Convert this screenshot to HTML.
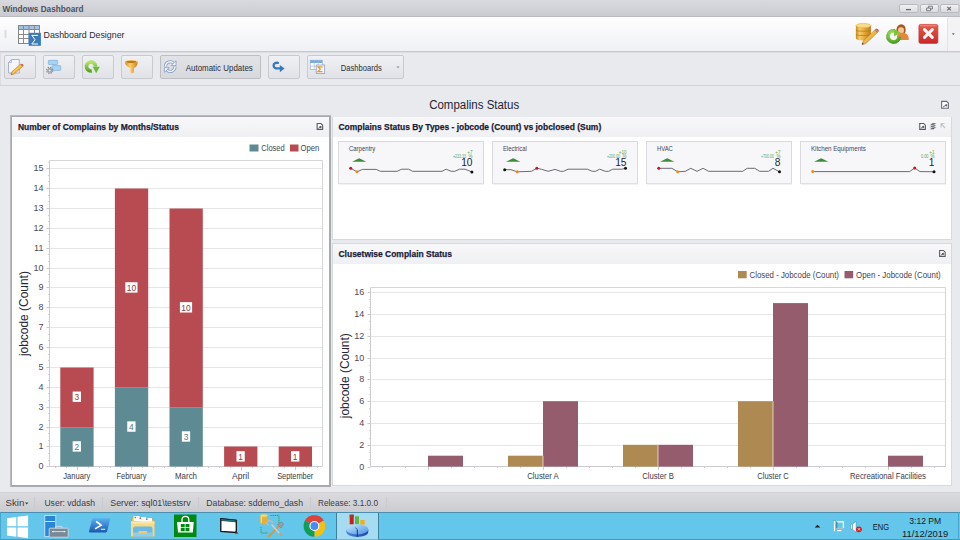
<!DOCTYPE html>
<html><head><meta charset="utf-8"><style>
html,body{margin:0;padding:0;width:960px;height:540px;overflow:hidden;background:#e9eaee}
svg{display:block;font-family:"Liberation Sans", sans-serif}
</style></head><body>
<svg width="960" height="540" viewBox="0 0 960 540">
<defs>
<linearGradient id="gTitle" x1="0" y1="0" x2="0" y2="1"><stop offset="0" stop-color="#d9dadf"/><stop offset="1" stop-color="#cacbd0"/></linearGradient>
<linearGradient id="gRib" x1="0" y1="0" x2="0" y2="1"><stop offset="0" stop-color="#fefefe"/><stop offset="1" stop-color="#f0f1f5"/></linearGradient>
<linearGradient id="gBtn" x1="0" y1="0" x2="0" y2="1"><stop offset="0" stop-color="#f0f1f4"/><stop offset="1" stop-color="#e1e2e7"/></linearGradient>
<linearGradient id="gBtnP" x1="0" y1="0" x2="0" y2="1"><stop offset="0" stop-color="#e2e3e6"/><stop offset="1" stop-color="#d8d9dd"/></linearGradient>
<linearGradient id="gWb" x1="0" y1="0" x2="0" y2="1"><stop offset="0" stop-color="#f3f3f5"/><stop offset="1" stop-color="#d9dadf"/></linearGradient>
<linearGradient id="gStat" x1="0" y1="0" x2="0" y2="1"><stop offset="0" stop-color="#dcdce0"/><stop offset="1" stop-color="#cbccd0"/></linearGradient>
<linearGradient id="gGold" x1="0" y1="0" x2="1" y2="0"><stop offset="0" stop-color="#d99a2a"/><stop offset="0.5" stop-color="#f7d47a"/><stop offset="1" stop-color="#d38f20"/></linearGradient>
<linearGradient id="gRed" x1="0" y1="0" x2="0" y2="1"><stop offset="0" stop-color="#e85a48"/><stop offset="1" stop-color="#c8282a"/></linearGradient>
<linearGradient id="gGreen" x1="0" y1="0" x2="0" y2="1"><stop offset="0" stop-color="#9bd24a"/><stop offset="1" stop-color="#4b9a1e"/></linearGradient>
<linearGradient id="gHead" x1="0" y1="0" x2="0" y2="1"><stop offset="0" stop-color="#f8f8fa"/><stop offset="1" stop-color="#eff0f3"/></linearGradient>
</defs>
<rect x="0" y="0" width="960" height="540" fill="#e9eaee" />
<rect x="0" y="0" width="960" height="17" fill="url(#gTitle)" />
<line x1="0" y1="16.5" x2="960" y2="16.5" stroke="#babbc1" stroke-width="1" />
<text x="2.5" y="12" font-size="9.3" fill="#50505e" font-weight="bold" text-anchor="start" textLength="81" lengthAdjust="spacingAndGlyphs" >Windows Dashboard</text>
<rect x="899.5" y="4.5" width="18.5" height="8" rx="1.5" fill="url(#gWb)" stroke="#b8b9be" stroke-width="1"/>
<rect x="920.5" y="4.5" width="18" height="8" rx="1.5" fill="url(#gWb)" stroke="#b8b9be" stroke-width="1"/>
<rect x="940.5" y="4.5" width="18.5" height="8" rx="1.5" fill="url(#gWb)" stroke="#b8b9be" stroke-width="1"/>
<line x1="906" y1="9.6" x2="911" y2="9.6" stroke="#6a6a74" stroke-width="1.3" />
<path d="M926.6 8h4v2.8h-4z M928.4 8v-1.8h4v2.8h-1.8" fill="none" stroke="#7a7a84" stroke-width="1"/>
<path d="M947.3 6.8l3.6 3.6 M950.9 6.8l-3.6 3.6" stroke="#6a6a74" stroke-width="1.2"/>
<rect x="0" y="17" width="960" height="34" fill="url(#gRib)" />
<line x1="0" y1="51.5" x2="960" y2="51.5" stroke="#c8c9ce" stroke-width="1" />
<line x1="947.5" y1="18" x2="947.5" y2="51" stroke="#e3e3e6" stroke-width="1" />
<rect x="948" y="17" width="12" height="34" fill="#f3f3f5" />
<path d="M951.8 33.3h3l-1.5 1.7z" fill="#666"/>
<rect x="4.5" y="29.9" width="2" height="7.8" fill="#dcdce0"/>
<g>
<rect x="18.5" y="25.5" width="21" height="18" fill="#ffffff" stroke="#858585" stroke-width="1"/>
<rect x="19" y="26" width="20" height="3.5" fill="#a2c2e4"/>
<path d="M23.5 25.5v18 M29 25.5v18 M34.5 25.5v18 M18.5 29.5h21 M18.5 34.5h21 M18.5 38.5h21" stroke="#8a8a8a" stroke-width="1"/>
<rect x="28.7" y="32.8" width="12.2" height="13" fill="#3a7abf"/>
<path d="M37.9 35.4h-6.1l3.3 4.3-3.3 4.3h6.2" fill="none" stroke="#ffffff" stroke-width="1"/>
</g>
<text x="43.5" y="37.5" font-size="9.8" fill="#2c2c36" font-weight="normal" text-anchor="start" textLength="81" lengthAdjust="spacingAndGlyphs" >Dashboard Designer</text>
<defs><linearGradient id="gDb" x1="0" y1="0" x2="1" y2="0"><stop offset="0" stop-color="#c98a22"/><stop offset="0.25" stop-color="#f6cf6a"/><stop offset="0.55" stop-color="#e7aa3a"/><stop offset="1" stop-color="#c07a1a"/></linearGradient>
<linearGradient id="gPen" x1="0" y1="0" x2="1" y2="1"><stop offset="0" stop-color="#fbe27a"/><stop offset="1" stop-color="#e08a20"/></linearGradient>
<radialGradient id="gRing" cx="0.4" cy="0.3" r="0.8"><stop offset="0" stop-color="#b8e67a"/><stop offset="1" stop-color="#4a9e22"/></radialGradient></defs>
<g>
<path d="M855.9 25.6v12.6c0 1.3 3.4 2.3 7.5 2.3s7.5-1 7.5-2.3v-12.6z" fill="url(#gDb)"/>
<ellipse cx="863.4" cy="25.6" rx="7.5" ry="2.2" fill="#f8dc8a" stroke="#d9a040" stroke-width="0.5"/>
<path d="M855.9 30.3c1 1.2 14 1.2 15 0 M855.9 34.6c1 1.2 14 1.2 15 0" stroke="#b87818" stroke-width="0.8" fill="none"/>
<path d="M862 44.6l1.2-3.6 12.4-11.8 2.6 2.6-12.4 11.8z" fill="url(#gPen)" stroke="#a86a18" stroke-width="0.5"/>
<path d="M875.6 29.2l2.6 2.6 0.6-0.6c0.4-0.9-1.4-2.9-2.4-2.6z" fill="#e0585a"/>
<path d="M874.6 30.2l2.6 2.6 0.8-0.8-2.6-2.6z" fill="#7a8cb0"/>
<path d="M862 44.6l0.6-1.9 1.3 1.3z" fill="#2a2a4a"/>
</g>
<g>
<path d="M896.8 33c-0.7-2-0.4-4.8 0.6-6.2 0.8-1.6 2.2-2.6 3.8-2.6s3.2 0.9 3.9 2.6c0.8 1.6 0.7 4.5 0 6.2z" fill="#a9561f"/>
<ellipse cx="901" cy="30.3" rx="3" ry="3.6" fill="#f4c79a"/>
<path d="M897.4 28.5c0.5-2.2 1.8-3.1 3.6-3.1s3.2 0.9 3.6 3.1c-1.4-1-2.4-1.2-3.6-1.2s-2.4 0.3-3.6 1.2z" fill="#a9561f"/>
<path d="M897 40v-3.2c0-2.6 2-4.1 4.2-4.1h1.6c3.2 0 5.9 2.3 5.9 5.6v1.7z" fill="#e2883a"/>
<path d="M899.2 36.6a5.6 5.6 0 1 1-4.6-5.7" fill="none" stroke="url(#gRing)" stroke-width="3.8"/>
<path d="M893.8 28.6l6.6 4.2-6.2 3.6z" fill="#7cc43a"/>
</g>
<g>
<rect x="918.9" y="24.4" width="19" height="19" rx="1.6" fill="url(#gRed)" stroke="#c03028" stroke-width="0.6"/>
<path d="M920 25.8h16.8" stroke="#f4a090" stroke-width="0.8"/>
<path d="M924.5 29.6l7.8 7.8 M932.3 29.6l-7.8 7.8" stroke="#f4f6fa" stroke-width="3" stroke-linecap="round"/>
</g>
<rect x="0" y="52" width="960" height="33" fill="#e9eaee" />
<line x1="0" y1="52.5" x2="960" y2="52.5" stroke="#dcdde1" stroke-width="1" />
<line x1="0" y1="85.5" x2="960" y2="85.5" stroke="#d3d4d8" stroke-width="1" />
<line x1="0.5" y1="52" x2="0.5" y2="85" stroke="#dcdce0" stroke-width="1" />
<rect x="4.5" y="55.5" width="31" height="23" rx="1.5" fill="url(#gBtn)" stroke="#c9cacf" stroke-width="1"/>
<rect x="43.5" y="55.5" width="31" height="23" rx="1.5" fill="url(#gBtn)" stroke="#c9cacf" stroke-width="1"/>
<rect x="82.5" y="55.5" width="31" height="23" rx="1.5" fill="url(#gBtn)" stroke="#c9cacf" stroke-width="1"/>
<rect x="121.5" y="55.5" width="31" height="23" rx="1.5" fill="url(#gBtn)" stroke="#c9cacf" stroke-width="1"/>
<rect x="160.5" y="55.5" width="100" height="23" rx="1.5" fill="url(#gBtnP)" stroke="#bebfc5" stroke-width="1"/>
<rect x="268.5" y="55.5" width="31" height="23" rx="1.5" fill="url(#gBtn)" stroke="#c9cacf" stroke-width="1"/>
<rect x="307.5" y="55.5" width="96" height="23" rx="1.5" fill="url(#gBtn)" stroke="#c9cacf" stroke-width="1"/>
<g>
<path d="M11.5 59.5h7.8v13.5h-10.8v-10.5z" fill="#f4f6fc" stroke="#a4a8d0" stroke-width="0.9"/>
<path d="M8.5 62.5h3v-3z" fill="#dfe2f2" stroke="#a4a8d0" stroke-width="0.7"/>
<path d="M11 74.8l0.8-3 8.6-7.6 2.3 2.3-8.6 7.6z" fill="#f3b63c" stroke="#b7701c" stroke-width="0.5"/>
<path d="M12.6 72.8l8.3-7.1" stroke="#fde08a" stroke-width="0.6"/>
<path d="M20.7 64.6l1.8 1.8 1-0.9c0.3-0.6-1-2-1.7-1.8z" fill="#e0585a"/>
<path d="M11.2 74.6l0.4-1.3 0.9 0.9z" fill="#555"/>
</g>
<g>
<rect x="48.3" y="60.3" width="9.3" height="4.2" rx="0.7" fill="#a8d4f4" stroke="#6ea6d8" stroke-width="0.6"/>
<rect x="52" y="65.6" width="8.6" height="4.8" rx="0.7" fill="#a8d4f4" stroke="#6ea6d8" stroke-width="0.6"/>
<circle cx="49.7" cy="70.4" r="3" fill="none" stroke="#8a8c92" stroke-width="1.3" stroke-dasharray="1.3 1.05"/>
<circle cx="49.7" cy="70.4" r="2.4" fill="#9a9ca2"/>
<circle cx="49.7" cy="70.4" r="1" fill="#f0f0f2"/>
</g>
<defs><linearGradient id="gRef" x1="0" y1="0" x2="0" y2="1"><stop offset="0" stop-color="#b6e46a"/><stop offset="1" stop-color="#5aa526"/></linearGradient></defs>
<g>
<path d="M95.5 66.5A4.5 4.5 0 1 0 91.8 70.9" fill="none" stroke="url(#gRef)" stroke-width="3.7"/>
<path d="M92.6 66.8h7.2l-3.6 6.5z" fill="#6cbb30"/>
</g>
<defs><linearGradient id="gFun" x1="0" y1="0" x2="1" y2="0"><stop offset="0" stop-color="#d98a1c"/><stop offset="0.4" stop-color="#fbd06a"/><stop offset="1" stop-color="#d0801a"/></linearGradient></defs>
<g>
<path d="M124.9 61.6C124.9 65.2 127.8 67.4 130.4 68.1V72.6Q132.2 73.8 134 72.6V68.1C136.6 67.4 137.7 65.2 137.7 61.6Z" fill="url(#gFun)"/>
<ellipse cx="131.3" cy="61.7" rx="6.4" ry="1.6" fill="#f6c660"/>
<ellipse cx="131.3" cy="61.9" rx="5" ry="1.1" fill="#c07818"/>
</g>
<g fill="none">
<path d="M165.4 66.6A4.8 4.8 0 0 1 173.6 63.2" stroke="#8299c2" stroke-width="3"/>
<path d="M175 66.6A4.8 4.8 0 0 1 166.8 70" stroke="#8299c2" stroke-width="3"/>
<path d="M165.4 66.6A4.8 4.8 0 0 1 173.6 63.2" stroke="#f4f7fc" stroke-width="1.4"/>
<path d="M175 66.6A4.8 4.8 0 0 1 166.8 70" stroke="#f4f7fc" stroke-width="1.4"/>
</g>
<path d="M176 65.6L176 60.8 171.2 65.6z" fill="#f4f7fc" stroke="#8299c2" stroke-width="0.8" stroke-linejoin="round"/>
<path d="M164.4 67.6L164.4 72.4 169.2 67.6z" fill="#f4f7fc" stroke="#8299c2" stroke-width="0.8" stroke-linejoin="round"/>
<text x="185.8" y="71" font-size="9" fill="#2c2c36" font-weight="normal" text-anchor="start" textLength="67" lengthAdjust="spacingAndGlyphs" >Automatic Updates</text>
<path d="M278 62.8c-2.5-0.3-4.4 0.8-4.4 2.6s1.6 3 4.2 3h3" fill="none" stroke="#3578c0" stroke-width="2.3" stroke-linecap="round"/>
<path d="M279.8 65l4.8 3.5-4.8 3.8z" fill="#3578c0"/>
<g>
<rect x="310.2" y="60.2" width="12" height="9.3" fill="#ffffff" stroke="#8aa4cc" stroke-width="0.6"/>
<rect x="310.2" y="60.2" width="12" height="2.8" fill="#78aae0"/>
<path d="M314.2 60.2v9.3 M318.2 60.2v9.3 M310.2 66.2h12" stroke="#9ab4d8" stroke-width="0.6"/>
<rect x="316.2" y="65" width="8.5" height="8.5" fill="#f6f6f8" stroke="#7e94b8" stroke-width="0.7"/>
<path d="M322.6 66.8h-4.6l2.3 2.4-2.3 2.4h4.6" fill="none" stroke="#e89a30" stroke-width="1.3"/>
</g>
<text x="340.8" y="71" font-size="9" fill="#2c2c36" font-weight="normal" text-anchor="start" textLength="41" lengthAdjust="spacingAndGlyphs" >Dashboards</text>
<path d="M396.5 66.5h3l-1.5 1.7z" fill="#8a8a92"/>
<text x="429.2" y="109" font-size="12.5" fill="#252535" font-weight="normal" text-anchor="start" textLength="90" lengthAdjust="spacingAndGlyphs" >Compalins Status</text>
<path d="M941.65 101.35H946.6L948.35 103.1V108.25H941.65Z" fill="#ffffff" stroke="#6a6a76" stroke-width="1.1" stroke-linejoin="miter"/>
<path d="M942.8000000000001 107.3L946.5 104.5" stroke="#6a6a76" stroke-width="1"/>
<circle cx="946.3" cy="105.39999999999999" r="1.1" fill="#6a6a76"/>
<rect x="10" y="115" width="321" height="372" fill="#a9aaaf" />
<rect x="12" y="117" width="317" height="368" fill="#ffffff" />
<line x1="10" y1="115.5" x2="331" y2="115.5" stroke="#b9bac0" stroke-width="1" />
<line x1="10.5" y1="115" x2="10.5" y2="487" stroke="#b9bac0" stroke-width="1" />
<rect x="12" y="117" width="317" height="20" fill="url(#gHead)" />
<text x="18" y="129.5" font-size="9.3" fill="#1c1c38" font-weight="bold" text-anchor="start" textLength="161" lengthAdjust="spacingAndGlyphs" stroke="#1c1c38" stroke-width="0.25">Number of Complains by Months/Status</text>
<path d="M317.15000000000003 123.55H320.90000000000003L322.65000000000003 125.3V129.35H317.15000000000003Z" fill="#ffffff" stroke="#5a5a66" stroke-width="1.1" stroke-linejoin="miter"/>
<path d="M318.3 128.4L320.80000000000007 126.15" stroke="#5a5a66" stroke-width="1"/>
<circle cx="320.6" cy="127.05" r="1.1" fill="#5a5a66"/>
<rect x="249.5" y="144.5" width="9" height="7" fill="#5e8a93" />
<text x="261.3" y="151" font-size="8.8" fill="#444452" font-weight="normal" text-anchor="start" textLength="23.4" lengthAdjust="spacingAndGlyphs" >Closed</text>
<rect x="290" y="144.5" width="8.5" height="7" fill="#b84b51" />
<text x="300.6" y="151" font-size="8.8" fill="#444452" font-weight="normal" text-anchor="start" textLength="18.8" lengthAdjust="spacingAndGlyphs" >Open</text>
<line x1="49.5" y1="446.5" x2="322.5" y2="446.5" stroke="#e6e6e8" stroke-width="1" />
<line x1="49.5" y1="427.5" x2="322.5" y2="427.5" stroke="#e6e6e8" stroke-width="1" />
<line x1="49.5" y1="407.5" x2="322.5" y2="407.5" stroke="#e6e6e8" stroke-width="1" />
<line x1="49.5" y1="387.5" x2="322.5" y2="387.5" stroke="#e6e6e8" stroke-width="1" />
<line x1="49.5" y1="367.5" x2="322.5" y2="367.5" stroke="#e6e6e8" stroke-width="1" />
<line x1="49.5" y1="347.5" x2="322.5" y2="347.5" stroke="#e6e6e8" stroke-width="1" />
<line x1="49.5" y1="327.5" x2="322.5" y2="327.5" stroke="#e6e6e8" stroke-width="1" />
<line x1="49.5" y1="307.5" x2="322.5" y2="307.5" stroke="#e6e6e8" stroke-width="1" />
<line x1="49.5" y1="287.5" x2="322.5" y2="287.5" stroke="#e6e6e8" stroke-width="1" />
<line x1="49.5" y1="268.5" x2="322.5" y2="268.5" stroke="#e6e6e8" stroke-width="1" />
<line x1="49.5" y1="248.5" x2="322.5" y2="248.5" stroke="#e6e6e8" stroke-width="1" />
<line x1="49.5" y1="228.5" x2="322.5" y2="228.5" stroke="#e6e6e8" stroke-width="1" />
<line x1="49.5" y1="208.5" x2="322.5" y2="208.5" stroke="#e6e6e8" stroke-width="1" />
<line x1="49.5" y1="188.5" x2="322.5" y2="188.5" stroke="#e6e6e8" stroke-width="1" />
<line x1="49.5" y1="168.5" x2="322.5" y2="168.5" stroke="#e6e6e8" stroke-width="1" />
<line x1="49.5" y1="160.5" x2="322.5" y2="160.5" stroke="#d6d6da" stroke-width="1" />
<line x1="322.5" y1="160.5" x2="322.5" y2="466.5" stroke="#d6d6da" stroke-width="1" />
<line x1="49.5" y1="160.5" x2="49.5" y2="466.5" stroke="#cbcbd0" stroke-width="1" />
<line x1="49.5" y1="466.5" x2="322.5" y2="466.5" stroke="#cbcbd0" stroke-width="1" />
<line x1="46.5" y1="466.5" x2="49.5" y2="466.5" stroke="#c6c6cc" stroke-width="1" />
<text x="43.4" y="469.4" font-size="9" fill="#4a4a5a" font-weight="normal" text-anchor="end" >0</text>
<line x1="48" y1="460.5" x2="49.5" y2="460.5" stroke="#cfcfd4" stroke-width="1" />
<line x1="48" y1="453.5" x2="49.5" y2="453.5" stroke="#cfcfd4" stroke-width="1" />
<line x1="46.5" y1="446.5" x2="49.5" y2="446.5" stroke="#c6c6cc" stroke-width="1" />
<text x="43.4" y="449.4" font-size="9" fill="#4a4a5a" font-weight="normal" text-anchor="end" >1</text>
<line x1="48" y1="440.5" x2="49.5" y2="440.5" stroke="#cfcfd4" stroke-width="1" />
<line x1="48" y1="433.5" x2="49.5" y2="433.5" stroke="#cfcfd4" stroke-width="1" />
<line x1="46.5" y1="427.5" x2="49.5" y2="427.5" stroke="#c6c6cc" stroke-width="1" />
<text x="43.4" y="430.4" font-size="9" fill="#4a4a5a" font-weight="normal" text-anchor="end" >2</text>
<line x1="48" y1="420.5" x2="49.5" y2="420.5" stroke="#cfcfd4" stroke-width="1" />
<line x1="48" y1="413.5" x2="49.5" y2="413.5" stroke="#cfcfd4" stroke-width="1" />
<line x1="46.5" y1="407.5" x2="49.5" y2="407.5" stroke="#c6c6cc" stroke-width="1" />
<text x="43.4" y="410.4" font-size="9" fill="#4a4a5a" font-weight="normal" text-anchor="end" >3</text>
<line x1="48" y1="400.5" x2="49.5" y2="400.5" stroke="#cfcfd4" stroke-width="1" />
<line x1="48" y1="393.5" x2="49.5" y2="393.5" stroke="#cfcfd4" stroke-width="1" />
<line x1="46.5" y1="387.5" x2="49.5" y2="387.5" stroke="#c6c6cc" stroke-width="1" />
<text x="43.4" y="390.4" font-size="9" fill="#4a4a5a" font-weight="normal" text-anchor="end" >4</text>
<line x1="48" y1="380.5" x2="49.5" y2="380.5" stroke="#cfcfd4" stroke-width="1" />
<line x1="48" y1="374.5" x2="49.5" y2="374.5" stroke="#cfcfd4" stroke-width="1" />
<line x1="46.5" y1="367.5" x2="49.5" y2="367.5" stroke="#c6c6cc" stroke-width="1" />
<text x="43.4" y="370.4" font-size="9" fill="#4a4a5a" font-weight="normal" text-anchor="end" >5</text>
<line x1="48" y1="360.5" x2="49.5" y2="360.5" stroke="#cfcfd4" stroke-width="1" />
<line x1="48" y1="354.5" x2="49.5" y2="354.5" stroke="#cfcfd4" stroke-width="1" />
<line x1="46.5" y1="347.5" x2="49.5" y2="347.5" stroke="#c6c6cc" stroke-width="1" />
<text x="43.4" y="350.4" font-size="9" fill="#4a4a5a" font-weight="normal" text-anchor="end" >6</text>
<line x1="48" y1="340.5" x2="49.5" y2="340.5" stroke="#cfcfd4" stroke-width="1" />
<line x1="48" y1="334.5" x2="49.5" y2="334.5" stroke="#cfcfd4" stroke-width="1" />
<line x1="46.5" y1="327.5" x2="49.5" y2="327.5" stroke="#c6c6cc" stroke-width="1" />
<text x="43.4" y="330.4" font-size="9" fill="#4a4a5a" font-weight="normal" text-anchor="end" >7</text>
<line x1="48" y1="321.5" x2="49.5" y2="321.5" stroke="#cfcfd4" stroke-width="1" />
<line x1="48" y1="314.5" x2="49.5" y2="314.5" stroke="#cfcfd4" stroke-width="1" />
<line x1="46.5" y1="307.5" x2="49.5" y2="307.5" stroke="#c6c6cc" stroke-width="1" />
<text x="43.4" y="310.4" font-size="9" fill="#4a4a5a" font-weight="normal" text-anchor="end" >8</text>
<line x1="48" y1="301.5" x2="49.5" y2="301.5" stroke="#cfcfd4" stroke-width="1" />
<line x1="48" y1="294.5" x2="49.5" y2="294.5" stroke="#cfcfd4" stroke-width="1" />
<line x1="46.5" y1="287.5" x2="49.5" y2="287.5" stroke="#c6c6cc" stroke-width="1" />
<text x="43.4" y="290.4" font-size="9" fill="#4a4a5a" font-weight="normal" text-anchor="end" >9</text>
<line x1="48" y1="281.5" x2="49.5" y2="281.5" stroke="#cfcfd4" stroke-width="1" />
<line x1="48" y1="274.5" x2="49.5" y2="274.5" stroke="#cfcfd4" stroke-width="1" />
<line x1="46.5" y1="268.5" x2="49.5" y2="268.5" stroke="#c6c6cc" stroke-width="1" />
<text x="43.4" y="271.4" font-size="9" fill="#4a4a5a" font-weight="normal" text-anchor="end" >10</text>
<line x1="48" y1="261.5" x2="49.5" y2="261.5" stroke="#cfcfd4" stroke-width="1" />
<line x1="48" y1="254.5" x2="49.5" y2="254.5" stroke="#cfcfd4" stroke-width="1" />
<line x1="46.5" y1="248.5" x2="49.5" y2="248.5" stroke="#c6c6cc" stroke-width="1" />
<text x="43.4" y="251.4" font-size="9" fill="#4a4a5a" font-weight="normal" text-anchor="end" >11</text>
<line x1="48" y1="241.5" x2="49.5" y2="241.5" stroke="#cfcfd4" stroke-width="1" />
<line x1="48" y1="234.5" x2="49.5" y2="234.5" stroke="#cfcfd4" stroke-width="1" />
<line x1="46.5" y1="228.5" x2="49.5" y2="228.5" stroke="#c6c6cc" stroke-width="1" />
<text x="43.4" y="231.4" font-size="9" fill="#4a4a5a" font-weight="normal" text-anchor="end" >12</text>
<line x1="48" y1="221.5" x2="49.5" y2="221.5" stroke="#cfcfd4" stroke-width="1" />
<line x1="48" y1="215.5" x2="49.5" y2="215.5" stroke="#cfcfd4" stroke-width="1" />
<line x1="46.5" y1="208.5" x2="49.5" y2="208.5" stroke="#c6c6cc" stroke-width="1" />
<text x="43.4" y="211.4" font-size="9" fill="#4a4a5a" font-weight="normal" text-anchor="end" >13</text>
<line x1="48" y1="201.5" x2="49.5" y2="201.5" stroke="#cfcfd4" stroke-width="1" />
<line x1="48" y1="195.5" x2="49.5" y2="195.5" stroke="#cfcfd4" stroke-width="1" />
<line x1="46.5" y1="188.5" x2="49.5" y2="188.5" stroke="#c6c6cc" stroke-width="1" />
<text x="43.4" y="191.4" font-size="9" fill="#4a4a5a" font-weight="normal" text-anchor="end" >14</text>
<line x1="48" y1="181.5" x2="49.5" y2="181.5" stroke="#cfcfd4" stroke-width="1" />
<line x1="48" y1="175.5" x2="49.5" y2="175.5" stroke="#cfcfd4" stroke-width="1" />
<line x1="46.5" y1="168.5" x2="49.5" y2="168.5" stroke="#c6c6cc" stroke-width="1" />
<text x="43.4" y="171.4" font-size="9" fill="#4a4a5a" font-weight="normal" text-anchor="end" >15</text>
<line x1="48" y1="162.5" x2="49.5" y2="162.5" stroke="#cfcfd4" stroke-width="1" />
<line x1="55.5" y1="466.5" x2="55.5" y2="468" stroke="#cacacf" stroke-width="1" />
<line x1="66.5" y1="466.5" x2="66.5" y2="468" stroke="#cacacf" stroke-width="1" />
<line x1="77.5" y1="466.5" x2="77.5" y2="470" stroke="#cacacf" stroke-width="1" />
<line x1="88.5" y1="466.5" x2="88.5" y2="468" stroke="#cacacf" stroke-width="1" />
<line x1="99.5" y1="466.5" x2="99.5" y2="468" stroke="#cacacf" stroke-width="1" />
<line x1="110.5" y1="466.5" x2="110.5" y2="468" stroke="#cacacf" stroke-width="1" />
<line x1="120.5" y1="466.5" x2="120.5" y2="468" stroke="#cacacf" stroke-width="1" />
<line x1="131.5" y1="466.5" x2="131.5" y2="470" stroke="#cacacf" stroke-width="1" />
<line x1="142.5" y1="466.5" x2="142.5" y2="468" stroke="#cacacf" stroke-width="1" />
<line x1="153.5" y1="466.5" x2="153.5" y2="468" stroke="#cacacf" stroke-width="1" />
<line x1="164.5" y1="466.5" x2="164.5" y2="468" stroke="#cacacf" stroke-width="1" />
<line x1="175.5" y1="466.5" x2="175.5" y2="468" stroke="#cacacf" stroke-width="1" />
<line x1="186.5" y1="466.5" x2="186.5" y2="470" stroke="#cacacf" stroke-width="1" />
<line x1="197.5" y1="466.5" x2="197.5" y2="468" stroke="#cacacf" stroke-width="1" />
<line x1="208.5" y1="466.5" x2="208.5" y2="468" stroke="#cacacf" stroke-width="1" />
<line x1="219.5" y1="466.5" x2="219.5" y2="468" stroke="#cacacf" stroke-width="1" />
<line x1="230.5" y1="466.5" x2="230.5" y2="468" stroke="#cacacf" stroke-width="1" />
<line x1="241.5" y1="466.5" x2="241.5" y2="470" stroke="#cacacf" stroke-width="1" />
<line x1="252.5" y1="466.5" x2="252.5" y2="468" stroke="#cacacf" stroke-width="1" />
<line x1="262.5" y1="466.5" x2="262.5" y2="468" stroke="#cacacf" stroke-width="1" />
<line x1="273.5" y1="466.5" x2="273.5" y2="468" stroke="#cacacf" stroke-width="1" />
<line x1="284.5" y1="466.5" x2="284.5" y2="468" stroke="#cacacf" stroke-width="1" />
<line x1="295.5" y1="466.5" x2="295.5" y2="470" stroke="#cacacf" stroke-width="1" />
<line x1="306.5" y1="466.5" x2="306.5" y2="468" stroke="#cacacf" stroke-width="1" />
<line x1="317.5" y1="466.5" x2="317.5" y2="468" stroke="#cacacf" stroke-width="1" />
<rect x="60.3" y="427.5" width="33.3" height="39.0" fill="#5e8a93" />
<rect x="60.3" y="367.5" width="33.3" height="60.0" fill="#b84b51" />
<text x="76.8" y="479" font-size="8.6" fill="#3a3a48" font-weight="normal" text-anchor="middle" textLength="27" lengthAdjust="spacingAndGlyphs" >January</text>
<rect x="72.64999999999999" y="441.22700000000003" width="8.3" height="10.4" fill="#ffffff" />
<text x="76.8" y="449.72700000000003" font-size="8.4" fill="#4f7a84" font-weight="normal" text-anchor="middle" >2</text>
<rect x="72.64999999999999" y="391.5445" width="8.3" height="10.4" fill="#ffffff" />
<text x="76.8" y="400.0445" font-size="8.4" fill="#8e3a48" font-weight="normal" text-anchor="middle" >3</text>
<rect x="114.9" y="387.5" width="33.3" height="79.0" fill="#5e8a93" />
<rect x="114.9" y="188.5" width="33.3" height="199.0" fill="#b84b51" />
<text x="131.4" y="479" font-size="8.6" fill="#3a3a48" font-weight="normal" text-anchor="middle" textLength="30" lengthAdjust="spacingAndGlyphs" >February</text>
<rect x="127.25" y="421.35400000000004" width="8.3" height="10.4" fill="#ffffff" />
<text x="131.4" y="429.85400000000004" font-size="8.4" fill="#4f7a84" font-weight="normal" text-anchor="middle" >4</text>
<rect x="125.30000000000001" y="282.243" width="12.2" height="10.4" fill="#ffffff" />
<text x="131.4" y="290.743" font-size="8.4" fill="#8e3a48" font-weight="normal" text-anchor="middle" >10</text>
<rect x="169.5" y="407.5" width="33.3" height="59.0" fill="#5e8a93" />
<rect x="169.5" y="208.5" width="33.3" height="199.0" fill="#b84b51" />
<text x="186.0" y="479" font-size="8.6" fill="#3a3a48" font-weight="normal" text-anchor="middle" textLength="22" lengthAdjust="spacingAndGlyphs" >March</text>
<rect x="181.85" y="431.2905" width="8.3" height="10.4" fill="#ffffff" />
<text x="186.0" y="439.7905" font-size="8.4" fill="#4f7a84" font-weight="normal" text-anchor="middle" >3</text>
<rect x="179.9" y="302.11600000000004" width="12.2" height="10.4" fill="#ffffff" />
<text x="186.0" y="310.61600000000004" font-size="8.4" fill="#8e3a48" font-weight="normal" text-anchor="middle" >10</text>
<rect x="224.1" y="446.5" width="33.3" height="20.0" fill="#b84b51" />
<text x="240.6" y="479" font-size="8.6" fill="#3a3a48" font-weight="normal" text-anchor="middle" textLength="17" lengthAdjust="spacingAndGlyphs" >April</text>
<rect x="236.45" y="451.1635" width="8.3" height="10.4" fill="#ffffff" />
<text x="240.6" y="459.6635" font-size="8.4" fill="#8e3a48" font-weight="normal" text-anchor="middle" >1</text>
<rect x="278.70000000000005" y="446.5" width="33.3" height="20.0" fill="#b84b51" />
<text x="295.20000000000005" y="479" font-size="8.6" fill="#3a3a48" font-weight="normal" text-anchor="middle" textLength="36" lengthAdjust="spacingAndGlyphs" >September</text>
<rect x="291.05000000000007" y="451.1635" width="8.3" height="10.4" fill="#ffffff" />
<text x="295.20000000000005" y="459.6635" font-size="8.4" fill="#8e3a48" font-weight="normal" text-anchor="middle" >1</text>
<text transform="translate(28.3,313.6) rotate(-90)" font-size="12" fill="#252535" text-anchor="middle" textLength="85" lengthAdjust="spacingAndGlyphs">jobcode (Count)</text>
<rect x="332" y="117" width="620" height="123" fill="#d8d9dd" />
<rect x="333" y="117" width="618" height="122" fill="#ffffff" />
<rect x="333" y="117" width="618" height="20" fill="url(#gHead)" />
<text x="338.5" y="130" font-size="9.3" fill="#1c1c38" font-weight="bold" text-anchor="start" textLength="262.7" lengthAdjust="spacingAndGlyphs" stroke="#1c1c38" stroke-width="0.25">Complains Status By Types - jobcode (Count) vs jobclosed (Sum)</text>
<path d="M919.75 123.45H923.6000000000001L925.3500000000001 125.2V129.35H919.75Z" fill="#ffffff" stroke="#5a5a66" stroke-width="1.1" stroke-linejoin="miter"/>
<path d="M920.9000000000001 128.4L923.5000000000001 126.10000000000001" stroke="#5a5a66" stroke-width="1"/>
<circle cx="923.3000000000001" cy="127.0" r="1.1" fill="#5a5a66"/>
<path d="M929.5 125.5l3-2.5h4l-3 2.5z M929.5 127.5l3-2.5h4l-3 2.5z M929.5 129.5l3-2.5h4l-3 2.5z" fill="#5a5a68" stroke="#fff" stroke-width="0.4"/>
<path d="M941 123.5v4 M941 123.5h3.5 M941.5 124l3.5 4" stroke="#c6c6cc" stroke-width="1.2" fill="none"/>
<rect x="338.5" y="141.5" width="145" height="42" fill="#f7f7fa" stroke="#d9d9de" stroke-width="1"/>
<line x1="339.0" y1="184" x2="484.0" y2="184" stroke="#e6e6ea" stroke-width="1" />
<text x="348.9" y="150.9" font-size="6.8" fill="#454556" font-weight="normal" text-anchor="start" textLength="26.5" lengthAdjust="spacingAndGlyphs" >Carpentry</text>
<path d="M352.0 161.8l7.2-3.6 7.2 3.6z" fill="#3c8c3c"/>
<path d="M350.7,168.3 L357,171.8 L362.5,169.4 L376.2,169.4 L380.4,171.3 L397.2,171.3 L401.7,169.2 L408.5,169.2 L412.7,171.3 L442,171.3 L446.1,169.2 L451.2,171.3 L454.7,171.3 L459.5,169.2 L465,169.2 L471.9,172" fill="none" stroke="#5a5a66" stroke-width="0.9" stroke-linejoin="round"/>
<circle cx="350.7" cy="168.3" r="1.5" fill="#c8102a"/>
<circle cx="357" cy="171.8" r="1.5" fill="#f08c10"/>
<circle cx="471.9" cy="172" r="1.5" fill="#111"/>
<text x="472.5" y="165.8" font-size="10.2" fill="#1c1c3c" font-weight="normal" text-anchor="end" >10</text>
<text x="453.0" y="157.6" font-size="4.8" fill="#5aa55a" font-weight="normal" text-anchor="start" textLength="13" lengthAdjust="spacingAndGlyphs" >+233.33</text>
<text x="472.5" y="157.8" font-size="4.6" fill="#5aa55a" font-weight="normal" text-anchor="end" >%</text>
<text x="472.5" y="153.8" font-size="4.6" fill="#5aa55a" font-weight="normal" text-anchor="end" >+7</text>
<rect x="492.5" y="141.5" width="145" height="42" fill="#f7f7fa" stroke="#d9d9de" stroke-width="1"/>
<line x1="493.0" y1="184" x2="638.0" y2="184" stroke="#e6e6ea" stroke-width="1" />
<text x="502.9" y="150.9" font-size="6.8" fill="#454556" font-weight="normal" text-anchor="start" textLength="24" lengthAdjust="spacingAndGlyphs" >Electrical</text>
<path d="M506.0 161.8l7.2-3.6 7.2 3.6z" fill="#3c8c3c"/>
<path d="M504.7,169.7 L511,169.7 L517.2,171.8 L531.6,171.3 L536.8,168.2 L541.2,169.2 L548.1,171.3 L555,169.4 L560.5,171.3 L563.5,171.3 L568.1,169.2 L587.4,169.2 L592.2,171.3 L595.6,171.3 L599.7,169.2 L605.2,171.3 L608.7,171.3 L612.8,169.2 L621.7,169.2 L625.5,168.3" fill="none" stroke="#5a5a66" stroke-width="0.9" stroke-linejoin="round"/>
<circle cx="504.7" cy="169.7" r="1.5" fill="#111"/>
<circle cx="517.2" cy="171.8" r="1.5" fill="#f08c10"/>
<circle cx="536.8" cy="168.2" r="1.5" fill="#c8102a"/>
<circle cx="625.5" cy="168.3" r="1.5" fill="#111"/>
<text x="626.5" y="165.8" font-size="10.2" fill="#1c1c3c" font-weight="normal" text-anchor="end" >15</text>
<text x="607.0" y="157.6" font-size="4.8" fill="#5aa55a" font-weight="normal" text-anchor="start" textLength="13" lengthAdjust="spacingAndGlyphs" >+200.00</text>
<text x="626.5" y="157.8" font-size="4.6" fill="#5aa55a" font-weight="normal" text-anchor="end" >%</text>
<text x="626.5" y="153.8" font-size="4.6" fill="#5aa55a" font-weight="normal" text-anchor="end" >+10</text>
<rect x="646.5" y="141.5" width="145" height="42" fill="#f7f7fa" stroke="#d9d9de" stroke-width="1"/>
<line x1="647.0" y1="184" x2="792.0" y2="184" stroke="#e6e6ea" stroke-width="1" />
<text x="656.9" y="150.9" font-size="6.8" fill="#454556" font-weight="normal" text-anchor="start" textLength="16" lengthAdjust="spacingAndGlyphs" >HVAC</text>
<path d="M660.0 161.8l7.2-3.6 7.2 3.6z" fill="#3c8c3c"/>
<path d="M658.7,168.3 L671.9,168.3 L677.7,171.8 L685.3,171.3 L690.8,168.3 L697,171.3 L703.1,168.3 L708.6,171.3 L742.7,171.3 L747.2,168.3 L754.8,168.3 L759.6,171.3 L768.5,171.3 L773,168.3 L779.5,171.8" fill="none" stroke="#5a5a66" stroke-width="0.9" stroke-linejoin="round"/>
<circle cx="658.7" cy="168.3" r="1.5" fill="#c8102a"/>
<circle cx="677.7" cy="171.8" r="1.5" fill="#f08c10"/>
<circle cx="779.5" cy="171.8" r="1.5" fill="#111"/>
<text x="780.5" y="165.8" font-size="10.2" fill="#1c1c3c" font-weight="normal" text-anchor="end" >8</text>
<text x="761.0" y="157.6" font-size="4.8" fill="#5aa55a" font-weight="normal" text-anchor="start" textLength="13" lengthAdjust="spacingAndGlyphs" >+700.00</text>
<text x="780.5" y="157.8" font-size="4.6" fill="#5aa55a" font-weight="normal" text-anchor="end" >%</text>
<text x="780.5" y="153.8" font-size="4.6" fill="#5aa55a" font-weight="normal" text-anchor="end" >+7</text>
<rect x="800.5" y="141.5" width="145" height="42" fill="#f7f7fa" stroke="#d9d9de" stroke-width="1"/>
<line x1="801.0" y1="184" x2="946.0" y2="184" stroke="#e6e6ea" stroke-width="1" />
<text x="810.9" y="150.9" font-size="6.8" fill="#454556" font-weight="normal" text-anchor="start" textLength="55" lengthAdjust="spacingAndGlyphs" >Kitchen Equipments</text>
<path d="M814.0 161.8l7.2-3.6 7.2 3.6z" fill="#3c8c3c"/>
<path d="M812.7,171.6 L909.6,171.6 L914.7,168 L919.9,171.6 L934,171.75" fill="none" stroke="#5a5a66" stroke-width="0.9" stroke-linejoin="round"/>
<circle cx="812.7" cy="171.6" r="1.5" fill="#f08c10"/>
<circle cx="914.7" cy="168" r="1.5" fill="#c8102a"/>
<circle cx="934" cy="171.75" r="1.5" fill="#111"/>
<text x="934.5" y="165.8" font-size="10.2" fill="#1c1c3c" font-weight="normal" text-anchor="end" >1</text>
<text x="920.9" y="157.6" font-size="4.8" fill="#5aa55a" font-weight="normal" text-anchor="start" textLength="7.6" lengthAdjust="spacingAndGlyphs" >0.00</text>
<text x="934.5" y="157.8" font-size="4.6" fill="#5aa55a" font-weight="normal" text-anchor="end" >%</text>
<text x="934.5" y="153.8" font-size="4.6" fill="#5aa55a" font-weight="normal" text-anchor="end" >+1</text>
<rect x="332" y="243" width="620" height="243" fill="#d8d9dd" />
<rect x="333" y="244" width="618" height="241" fill="#ffffff" />
<rect x="333" y="244" width="618" height="20" fill="url(#gHead)" />
<text x="338.5" y="257" font-size="9.3" fill="#1c1c38" font-weight="bold" text-anchor="start" textLength="113.4" lengthAdjust="spacingAndGlyphs" stroke="#1c1c38" stroke-width="0.25">Clusetwise Complain Status</text>
<path d="M939.65 250.45000000000002H943.4000000000001L945.1500000000001 252.20000000000002V256.34999999999997H939.65Z" fill="#ffffff" stroke="#5a5a66" stroke-width="1.1" stroke-linejoin="miter"/>
<path d="M940.8000000000001 255.39999999999998L943.3000000000001 253.1" stroke="#5a5a66" stroke-width="1"/>
<circle cx="943.1" cy="254.0" r="1.1" fill="#5a5a66"/>
<rect x="738" y="271" width="8.7" height="7.3" fill="#ae8a52" />
<text x="749.5" y="278" font-size="8.8" fill="#444452" font-weight="normal" text-anchor="start" textLength="89.5" lengthAdjust="spacingAndGlyphs" >Closed - Jobcode (Count)</text>
<rect x="844.5" y="271" width="8.7" height="7.3" fill="#955c6e" />
<text x="856" y="278" font-size="8.8" fill="#444452" font-weight="normal" text-anchor="start" textLength="84.7" lengthAdjust="spacingAndGlyphs" >Open - Jobcode (Count)</text>
<line x1="370.5" y1="445.5" x2="945.5" y2="445.5" stroke="#e6e6e8" stroke-width="1" />
<line x1="370.5" y1="423.5" x2="945.5" y2="423.5" stroke="#e6e6e8" stroke-width="1" />
<line x1="370.5" y1="401.5" x2="945.5" y2="401.5" stroke="#e6e6e8" stroke-width="1" />
<line x1="370.5" y1="379.5" x2="945.5" y2="379.5" stroke="#e6e6e8" stroke-width="1" />
<line x1="370.5" y1="358.5" x2="945.5" y2="358.5" stroke="#e6e6e8" stroke-width="1" />
<line x1="370.5" y1="336.5" x2="945.5" y2="336.5" stroke="#e6e6e8" stroke-width="1" />
<line x1="370.5" y1="314.5" x2="945.5" y2="314.5" stroke="#e6e6e8" stroke-width="1" />
<line x1="370.5" y1="292.5" x2="945.5" y2="292.5" stroke="#e6e6e8" stroke-width="1" />
<line x1="370.5" y1="287.5" x2="945.5" y2="287.5" stroke="#d6d6da" stroke-width="1" />
<line x1="945.5" y1="287.5" x2="945.5" y2="466.5" stroke="#d6d6da" stroke-width="1" />
<line x1="370.5" y1="287.5" x2="370.5" y2="466.5" stroke="#cbcbd0" stroke-width="1" />
<line x1="370.5" y1="466.5" x2="945.5" y2="466.5" stroke="#cbcbd0" stroke-width="1" />
<line x1="367.5" y1="467.5" x2="370.5" y2="467.5" stroke="#c6c6cc" stroke-width="1" />
<text x="364.3" y="470.4" font-size="9" fill="#4a4a5a" font-weight="normal" text-anchor="end" >0</text>
<line x1="369" y1="459.5" x2="370.5" y2="459.5" stroke="#cfcfd4" stroke-width="1" />
<line x1="369" y1="452.5" x2="370.5" y2="452.5" stroke="#cfcfd4" stroke-width="1" />
<line x1="367.5" y1="445.5" x2="370.5" y2="445.5" stroke="#c6c6cc" stroke-width="1" />
<text x="364.3" y="448.4" font-size="9" fill="#4a4a5a" font-weight="normal" text-anchor="end" >2</text>
<line x1="369" y1="438.5" x2="370.5" y2="438.5" stroke="#cfcfd4" stroke-width="1" />
<line x1="369" y1="430.5" x2="370.5" y2="430.5" stroke="#cfcfd4" stroke-width="1" />
<line x1="367.5" y1="423.5" x2="370.5" y2="423.5" stroke="#c6c6cc" stroke-width="1" />
<text x="364.3" y="426.4" font-size="9" fill="#4a4a5a" font-weight="normal" text-anchor="end" >4</text>
<line x1="369" y1="416.5" x2="370.5" y2="416.5" stroke="#cfcfd4" stroke-width="1" />
<line x1="369" y1="408.5" x2="370.5" y2="408.5" stroke="#cfcfd4" stroke-width="1" />
<line x1="367.5" y1="401.5" x2="370.5" y2="401.5" stroke="#c6c6cc" stroke-width="1" />
<text x="364.3" y="404.4" font-size="9" fill="#4a4a5a" font-weight="normal" text-anchor="end" >6</text>
<line x1="369" y1="394.5" x2="370.5" y2="394.5" stroke="#cfcfd4" stroke-width="1" />
<line x1="369" y1="387.5" x2="370.5" y2="387.5" stroke="#cfcfd4" stroke-width="1" />
<line x1="367.5" y1="379.5" x2="370.5" y2="379.5" stroke="#c6c6cc" stroke-width="1" />
<text x="364.3" y="382.4" font-size="9" fill="#4a4a5a" font-weight="normal" text-anchor="end" >8</text>
<line x1="369" y1="372.5" x2="370.5" y2="372.5" stroke="#cfcfd4" stroke-width="1" />
<line x1="369" y1="365.5" x2="370.5" y2="365.5" stroke="#cfcfd4" stroke-width="1" />
<line x1="367.5" y1="358.5" x2="370.5" y2="358.5" stroke="#c6c6cc" stroke-width="1" />
<text x="364.3" y="361.4" font-size="9" fill="#4a4a5a" font-weight="normal" text-anchor="end" >10</text>
<line x1="369" y1="350.5" x2="370.5" y2="350.5" stroke="#cfcfd4" stroke-width="1" />
<line x1="369" y1="343.5" x2="370.5" y2="343.5" stroke="#cfcfd4" stroke-width="1" />
<line x1="367.5" y1="336.5" x2="370.5" y2="336.5" stroke="#c6c6cc" stroke-width="1" />
<text x="364.3" y="339.4" font-size="9" fill="#4a4a5a" font-weight="normal" text-anchor="end" >12</text>
<line x1="369" y1="329.5" x2="370.5" y2="329.5" stroke="#cfcfd4" stroke-width="1" />
<line x1="369" y1="321.5" x2="370.5" y2="321.5" stroke="#cfcfd4" stroke-width="1" />
<line x1="367.5" y1="314.5" x2="370.5" y2="314.5" stroke="#c6c6cc" stroke-width="1" />
<text x="364.3" y="317.4" font-size="9" fill="#4a4a5a" font-weight="normal" text-anchor="end" >14</text>
<line x1="369" y1="307.5" x2="370.5" y2="307.5" stroke="#cfcfd4" stroke-width="1" />
<line x1="369" y1="299.5" x2="370.5" y2="299.5" stroke="#cfcfd4" stroke-width="1" />
<line x1="367.5" y1="292.5" x2="370.5" y2="292.5" stroke="#c6c6cc" stroke-width="1" />
<text x="364.3" y="295.4" font-size="9" fill="#4a4a5a" font-weight="normal" text-anchor="end" >16</text>
<line x1="382.5" y1="466.5" x2="382.5" y2="468" stroke="#cacacf" stroke-width="1" />
<line x1="405.5" y1="466.5" x2="405.5" y2="468" stroke="#cacacf" stroke-width="1" />
<line x1="428.5" y1="466.5" x2="428.5" y2="470" stroke="#cacacf" stroke-width="1" />
<line x1="451.5" y1="466.5" x2="451.5" y2="468" stroke="#cacacf" stroke-width="1" />
<line x1="474.5" y1="466.5" x2="474.5" y2="468" stroke="#cacacf" stroke-width="1" />
<line x1="497.5" y1="466.5" x2="497.5" y2="468" stroke="#cacacf" stroke-width="1" />
<line x1="520.5" y1="466.5" x2="520.5" y2="468" stroke="#cacacf" stroke-width="1" />
<line x1="543.5" y1="466.5" x2="543.5" y2="470" stroke="#cacacf" stroke-width="1" />
<line x1="566.5" y1="466.5" x2="566.5" y2="468" stroke="#cacacf" stroke-width="1" />
<line x1="589.5" y1="466.5" x2="589.5" y2="468" stroke="#cacacf" stroke-width="1" />
<line x1="612.5" y1="466.5" x2="612.5" y2="468" stroke="#cacacf" stroke-width="1" />
<line x1="635.5" y1="466.5" x2="635.5" y2="468" stroke="#cacacf" stroke-width="1" />
<line x1="658.5" y1="466.5" x2="658.5" y2="470" stroke="#cacacf" stroke-width="1" />
<line x1="681.5" y1="466.5" x2="681.5" y2="468" stroke="#cacacf" stroke-width="1" />
<line x1="704.5" y1="466.5" x2="704.5" y2="468" stroke="#cacacf" stroke-width="1" />
<line x1="727.5" y1="466.5" x2="727.5" y2="468" stroke="#cacacf" stroke-width="1" />
<line x1="750.5" y1="466.5" x2="750.5" y2="468" stroke="#cacacf" stroke-width="1" />
<line x1="773.5" y1="466.5" x2="773.5" y2="470" stroke="#cacacf" stroke-width="1" />
<line x1="796.5" y1="466.5" x2="796.5" y2="468" stroke="#cacacf" stroke-width="1" />
<line x1="819.5" y1="466.5" x2="819.5" y2="468" stroke="#cacacf" stroke-width="1" />
<line x1="842.5" y1="466.5" x2="842.5" y2="468" stroke="#cacacf" stroke-width="1" />
<line x1="865.5" y1="466.5" x2="865.5" y2="468" stroke="#cacacf" stroke-width="1" />
<line x1="888.5" y1="466.5" x2="888.5" y2="470" stroke="#cacacf" stroke-width="1" />
<line x1="911.5" y1="466.5" x2="911.5" y2="468" stroke="#cacacf" stroke-width="1" />
<line x1="934.5" y1="466.5" x2="934.5" y2="468" stroke="#cacacf" stroke-width="1" />
<rect x="428.0" y="455.70000000000005" width="35" height="10.899999999999977" fill="#955c6e" />
<rect x="508.0" y="455.70000000000005" width="35" height="10.899999999999977" fill="#ae8a52" />
<rect x="543.0" y="401.20000000000005" width="35" height="65.39999999999998" fill="#955c6e" />
<line x1="543.0" y1="455.70000000000005" x2="543.0" y2="466.6" stroke="#f0e6d6" stroke-width="0.8" />
<text x="543.0" y="479" font-size="8.6" fill="#3a3a48" font-weight="normal" text-anchor="middle" textLength="31.5" lengthAdjust="spacingAndGlyphs" >Cluster A</text>
<rect x="623.0" y="444.8" width="35" height="21.80000000000001" fill="#ae8a52" />
<rect x="658.0" y="444.8" width="35" height="21.80000000000001" fill="#955c6e" />
<line x1="658.0" y1="444.8" x2="658.0" y2="466.6" stroke="#f0e6d6" stroke-width="0.8" />
<text x="658.0" y="479" font-size="8.6" fill="#3a3a48" font-weight="normal" text-anchor="middle" textLength="31.5" lengthAdjust="spacingAndGlyphs" >Cluster B</text>
<rect x="738.0" y="401.20000000000005" width="35" height="65.39999999999998" fill="#ae8a52" />
<rect x="773.0" y="303.1" width="35" height="163.5" fill="#955c6e" />
<line x1="773.0" y1="401.20000000000005" x2="773.0" y2="466.6" stroke="#f0e6d6" stroke-width="0.8" />
<text x="773.0" y="479" font-size="8.6" fill="#3a3a48" font-weight="normal" text-anchor="middle" textLength="31.5" lengthAdjust="spacingAndGlyphs" >Cluster C</text>
<rect x="888.0" y="455.70000000000005" width="35" height="10.899999999999977" fill="#955c6e" />
<text x="888.0" y="479" font-size="8.6" fill="#3a3a48" font-weight="normal" text-anchor="middle" textLength="76" lengthAdjust="spacingAndGlyphs" >Recreational Facilities</text>
<text transform="translate(348.5,375.7) rotate(-90)" font-size="12" fill="#252535" text-anchor="middle" textLength="85" lengthAdjust="spacingAndGlyphs">jobcode (Count)</text>
<rect x="0" y="492" width="960" height="20" fill="url(#gStat)" />
<line x1="0" y1="492.5" x2="960" y2="492.5" stroke="#d4d4d8" stroke-width="1" />
<text x="5.6" y="505.6" font-size="9.6" fill="#3c3c4c" font-weight="normal" text-anchor="start" textLength="18.8" lengthAdjust="spacingAndGlyphs" >Skin</text>
<path d="M25 502.5h3.4l-1.7 2z" fill="#3c3c4c"/>
<line x1="34.5" y1="497" x2="34.5" y2="508" stroke="#c9c9ce" stroke-width="1" />
<line x1="102.5" y1="497" x2="102.5" y2="508" stroke="#c9c9ce" stroke-width="1" />
<line x1="198.5" y1="497" x2="198.5" y2="508" stroke="#c9c9ce" stroke-width="1" />
<line x1="310.5" y1="497" x2="310.5" y2="508" stroke="#c9c9ce" stroke-width="1" />
<line x1="386.5" y1="497" x2="386.5" y2="508" stroke="#c9c9ce" stroke-width="1" />
<text x="44.4" y="505.6" font-size="9.6" fill="#3c3c4c" font-weight="normal" text-anchor="start" textLength="50.6" lengthAdjust="spacingAndGlyphs" >User: vddash</text>
<text x="110.3" y="505.6" font-size="9.6" fill="#3c3c4c" font-weight="normal" text-anchor="start" textLength="80.3" lengthAdjust="spacingAndGlyphs" >Server: sql01\testsrv</text>
<text x="206.3" y="505.6" font-size="9.6" fill="#3c3c4c" font-weight="normal" text-anchor="start" textLength="96.7" lengthAdjust="spacingAndGlyphs" >Database: sddemo_dash</text>
<text x="318" y="505.6" font-size="9.6" fill="#3c3c4c" font-weight="normal" text-anchor="start" textLength="60" lengthAdjust="spacingAndGlyphs" >Release: 3.1.0.0</text>
<rect x="0" y="512" width="960" height="28" fill="#63c6ea" />
<line x1="0" y1="512.5" x2="960" y2="512.5" stroke="#4b8fae" stroke-width="1" />
<line x1="0" y1="539.5" x2="960" y2="539.5" stroke="#4b95b6" stroke-width="1" />
<line x1="0.5" y1="512" x2="0.5" y2="540" stroke="#4aa6cc" stroke-width="1" />
<line x1="958.5" y1="512" x2="958.5" y2="540" stroke="#4aa6cc" stroke-width="1" />
<rect x="336" y="513" width="43" height="26.5" fill="#a6dcf1"/><path d="M336.5 513v26.5 M378.5 513v26.5" stroke="#3f8099" stroke-width="1"/>
<path d="M7 518.2l9.3-1.3v9.3h-9.3z M17.5 516.7l10.6-1.3v10.8h-10.6z M7 527.4h9.3v9.3l-9.3-1.3z M17.5 527.4h10.6v10.8l-10.6-1.5z" fill="#ffffff"/>
<g>
<rect x="44.8" y="515.6" width="11" height="21" fill="#2a86d6" stroke="#d8ecfa" stroke-width="0.8"/>
<rect x="45.2" y="521" width="10.2" height="0.9" fill="#d8ecfa"/>
<rect x="49.2" y="528.2" width="19" height="9" rx="0.8" fill="#7a8896" stroke="#d0dae2" stroke-width="0.9"/>
<path d="M55.5 528v-1.6h6.4v1.6" fill="none" stroke="#d0dae2" stroke-width="0.9"/>
<path d="M52 531.6h13.4" stroke="#e8f0f6" stroke-width="0.8"/>
<path d="M52 531.6l1.5-1.2v2.4z M65.4 531.6l-1.5-1.2v2.4z" fill="#e8f0f6"/>
</g>
<defs><linearGradient id="gPs" x1="0" y1="0" x2="0" y2="1"><stop offset="0" stop-color="#5ab0ee"/><stop offset="1" stop-color="#1a58b0"/></linearGradient></defs>
<g>
<path d="M93.5 518.3h15.6c0.8 0 1.2 0.5 1 1.2l-3 11.8c-0.2 0.7-0.8 1.2-1.5 1.2h-15.6c-0.8 0-1.2-0.5-1-1.2l3-11.8c0.2-0.7 0.8-1.2 1.5-1.2z" fill="url(#gPs)"/>
<path d="M96.2 521.5l5 3.6-6.2 3.8" stroke="#ffffff" stroke-width="1.6" fill="none"/>
<path d="M100.8 529.3h4.4" stroke="#c8e4fa" stroke-width="1.2"/>
</g>
<g>
<path d="M131.5 517.5h6.5l1.5 1.5h14.5v17.5h-22.5z" fill="#e8b94c" stroke="#c8982c" stroke-width="0.6"/>
<rect x="133.5" y="516" width="6" height="5" fill="#ffffff"/>
<rect x="139" y="517" width="7" height="5" fill="#ffffff"/>
<rect x="145" y="518" width="7" height="4" fill="#ffffff"/>
<rect x="134.5" y="516.8" width="1.6" height="1.4" fill="#3aa64a"/>
<rect x="139.5" y="517.5" width="1.6" height="1.4" fill="#d83a2a"/>
<rect x="146" y="518.5" width="1.6" height="1.4" fill="#3a7ad8"/>
<path d="M131 521.5h23.5v15h-23.5z" fill="#f7da86"/>
<path d="M131 521.5h23.5v2h-23.5z" fill="#fbe8ac"/>
<path d="M133 528.5c0-1.2 1-2 2-2h15.5c1 0 2 0.8 2 2v8h-19.5z" fill="#6cb8e8"/>
<path d="M133 532.5h19.5v4h-19.5z" fill="#8ccdf2"/>
<rect x="138.5" y="531" width="8.5" height="2.5" fill="#f2cc60"/>
</g>
<g>
<rect x="174" y="514.5" width="22.5" height="22.5" fill="#008a12"/>
<path d="M177 522h16.8l-1 10.5h-14.8z" fill="#ffffff"/>
<path d="M182 522v-2.2a3.4 3.4 0 0 1 6.8 0v2.2" fill="none" stroke="#ffffff" stroke-width="1.3"/>
<path d="M180.8 524h3.9v3.3h-3.9z M185.5 524h3.9v3.3h-3.9z M180.8 528h3.9v3.3h-3.9z M185.5 528h3.9v3.3h-3.9z" fill="#008a12"/>
</g>
<g>
<path d="M220.8 518.7l15.5 1.6v12.2l-15.5-1.2z" fill="#ffffff" stroke="#111111" stroke-width="1.3"/>
<path d="M220.8 518.7l15.5 1.6v1.6l-15.5-1.4z" fill="#2a8a8a" stroke="#111" stroke-width="0.6"/>
<path d="M235.5 530.5l3 3h-3.5z" fill="#333333"/>
</g>
<g>
<path d="M270.5 515.5h8.5v8 M261 527v6h7" fill="none" stroke="#3a9a2a" stroke-width="1" stroke-dasharray="1.2 0.9"/>
<path d="M260.3 515.6v7.6c0 0.8 1.6 1.2 3.6 1.2s3.6-0.4 3.6-1.2v-7.6z" fill="#e8b030"/>
<path d="M261.3 516v7" stroke="#f8e090" stroke-width="1.2"/>
<ellipse cx="263.9" cy="515.6" rx="3.6" ry="1.3" fill="#f6d870"/>
<path d="M268 537l11-11" stroke="#d89838" stroke-width="2.2"/>
<path d="M277.5 524.5l4-2.5 2 2-2.5 4z" fill="#9aa0a8" stroke="#6a707a" stroke-width="0.5"/>
<path d="M271.5 524.5l9.5 10.5" stroke="#c8ccd2" stroke-width="1.8"/>
<path d="M268.5 525.5a2.6 2.6 0 1 1 3.8-2.2" fill="none" stroke="#b8bcc4" stroke-width="1.4"/>
<path d="M279.5 533l2.2 3" stroke="#d8a040" stroke-width="2"/>
</g>
<g>
<path d="M314.4 526 L305 520.6 A10.85 10.85 0 0 1 323.8 520.6 Z" fill="#db4437"/>
<path d="M314.4 526 L323.8 520.6 A10.85 10.85 0 0 1 314.4 536.85 Z" fill="#f4c20d"/>
<path d="M314.4 526 L314.4 536.85 A10.85 10.85 0 0 1 305 520.6 Z" fill="#0f9d58"/>
<path d="M314.4 521.1 H323.8 A10.85 10.85 0 0 0 305 520.6z" fill="#db4437"/>
<circle cx="314.4" cy="526" r="5" fill="#ffffff"/>
<circle cx="314.4" cy="526" r="3.9" fill="#4a8af4"/>
</g>
<defs><linearGradient id="gPie" x1="0" y1="0" x2="1" y2="1"><stop offset="0" stop-color="#c4ecfb"/><stop offset="1" stop-color="#4a90e0"/></linearGradient>
<linearGradient id="gPieS" x1="0" y1="0" x2="1" y2="0"><stop offset="0" stop-color="#4a8ae0"/><stop offset="1" stop-color="#1a40b0"/></linearGradient></defs>
<g>
<rect x="349.7" y="514.7" width="4" height="9.6" fill="#d01c14"/>
<rect x="349.7" y="514.7" width="4" height="2.5" fill="#a83a30"/>
<rect x="355" y="516.3" width="4" height="7.8" fill="#58b848"/>
<rect x="360.3" y="520" width="4.3" height="4.6" fill="#f8a818"/>
<path d="M346.3 529.4v2.6a11 5 0 0 0 22 0v-2.6z" fill="url(#gPieS)"/>
<ellipse cx="357.3" cy="529.4" rx="11" ry="5" fill="url(#gPie)"/>
<path d="M357.3 529.6v7.3" stroke="#123090" stroke-width="1"/>
<path d="M355.5 527.6l1.8 2" stroke="#2a50b0" stroke-width="0.9"/>
</g>
<path d="M814.7 527.5l2.8-2.8 2.8 2.8z" fill="#1a1a1a"/>
<g>
<rect x="833.4" y="520.6" width="2.2" height="3.2" fill="#ffffff" stroke="#3a8aa8" stroke-width="0.4"/>
<rect x="833.9" y="523.5" width="1.2" height="7.8" fill="#ffffff"/>
<path d="M836.8 521.9h6.6v6" fill="none" stroke="#ffffff" stroke-width="1.3"/>
<path d="M836.8 521.9v6.2" fill="none" stroke="#2a7a98" stroke-width="1"/>
<path d="M836.5 528.3h7.2" stroke="#b8c4c8" stroke-width="1"/>
<path d="M837 530.6h4.4" stroke="#ffffff" stroke-width="1.2"/>
</g>
<path d="M850.7 524.2h1.6v4.8h-1.6z" fill="#ffffff" stroke="#2a7a98" stroke-width="0.4"/>
<path d="M852.6 524.2l3.4-2.8v10.8l-3.4-2.8z" fill="#ffffff" stroke="#2a7a98" stroke-width="0.4"/>
<circle cx="858.9" cy="529.3" r="2.9" fill="#e01818"/>
<path d="M857.7 528.1l2.4 2.4 M860.1 528.1l-2.4 2.4" stroke="#ffd0d0" stroke-width="0.9"/>
<text x="872.8" y="530" font-size="9.2" fill="#1a1a1a" font-weight="normal" text-anchor="start" textLength="16.4" lengthAdjust="spacingAndGlyphs" >ENG</text>
<text x="909.2" y="524.2" font-size="9.2" fill="#1a1a1a" font-weight="normal" text-anchor="start" textLength="32.1" lengthAdjust="spacingAndGlyphs" >3:12 PM</text>
<text x="902" y="536.7" font-size="9.2" fill="#1a1a1a" font-weight="normal" text-anchor="start" textLength="46.3" lengthAdjust="spacingAndGlyphs" >11/12/2019</text>
</svg></body></html>
